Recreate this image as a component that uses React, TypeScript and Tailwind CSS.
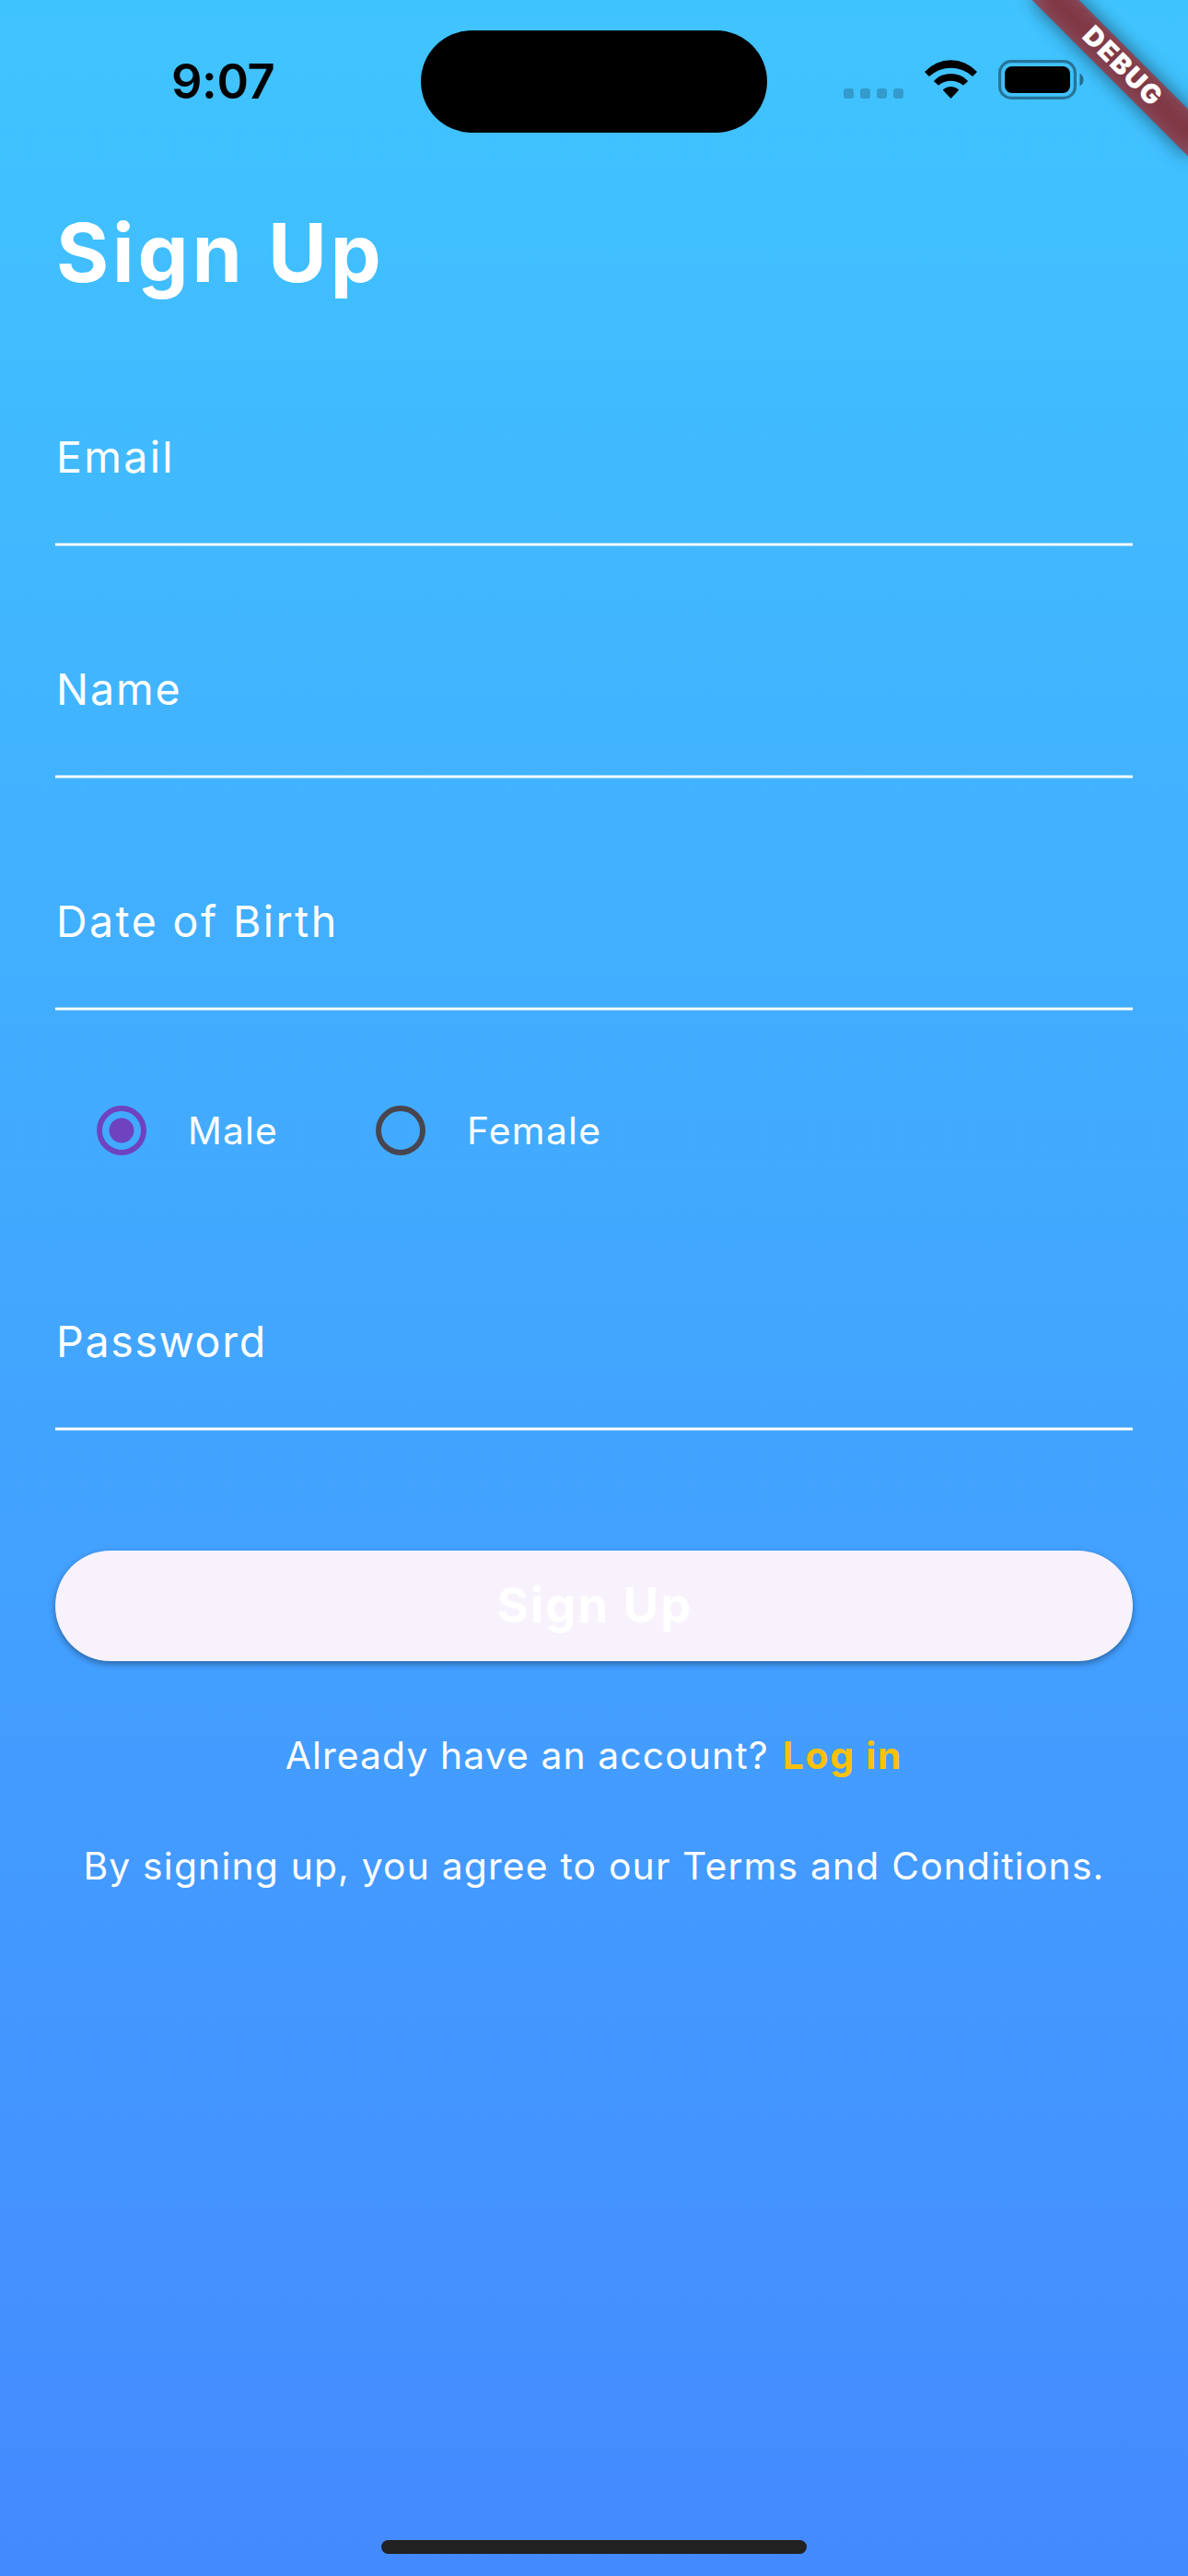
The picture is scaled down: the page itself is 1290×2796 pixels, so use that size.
import React from "react";

function StatusIcons() {
  return (
    <div className="mt-[65px] ml-[83px] flex h-[43px] items-end self-start">
      <svg width="65" height="12" viewBox="0 0 65 12">
        {[0, 18, 36, 54].map((x) => (
          <rect key={x} x={x} y="0" width="11" height="11" rx="3" fill="#000" fillOpacity="0.2" />
        ))}
      </svg>
      <svg width="57" height="43" viewBox="0 0 57 43" className="ml-[23px]">
        <path d="M0.5 13.6Q-0.1 13 0.5 12.4A38.3 38.3 0 0 1 56.5 12.4Q57.1 13 56.5 13.6L52.6 17.5Q52 18 51.4 17.5A34.3 34.3 0 0 0 5.6 17.5Q5 18 4.4 17.5Z" />
        <path d="M10.3 23.5Q9.8 23 10.4 22.4A25.6 25.6 0 0 1 46.6 22.4Q47.2 23 46.7 23.5L42.5 27.3Q42 27.8 41.4 27.3A20.5 20.5 0 0 0 15.6 27.3Q15 27.8 14.5 27.3Z" />
        <path d="M20.3 33.2Q19.7 32.7 20.3 32.1A12.3 12.3 0 0 1 36.7 32.1Q37.3 32.7 36.7 33.2L29 41.4Q28.5 41.9 28 41.4Z" />
      </svg>
      <svg width="94" height="43" viewBox="0 0 94 43" className="ml-[23px]">
        <rect x="1.6" y="1.6" width="81.8" height="39.8" rx="12.5" fill="none" stroke="#000" strokeOpacity="0.4" strokeWidth="3.2" />
        <rect x="7" y="7" width="71" height="29" rx="8" />
        <path d="M88.5 14.5V28.5A8.2 8.2 0 0 0 88.5 14.5Z" fillOpacity="0.45" />
      </svg>
    </div>
  );
}

function DebugBanner() {
  return (
    <div className="absolute top-0 right-0 h-[260px] w-[260px] overflow-hidden">
      <div className="absolute top-[54px] left-[68px] h-[36px] w-[240px] rotate-45">
        <div className="absolute inset-0 bg-black/50 blur-[10.5px]" />
        <div className="relative flex h-full items-center justify-center bg-[#b71c1c]/63 pb-[3px] pl-[2px] text-[29px] leading-none font-black tracking-[1.6px] text-white">
          DEBUG
        </div>
      </div>
    </div>
  );
}

function Field({ label, className }: { label: string; className: string }) {
  return (
    <div className={className}>
      <div className="h-[56px] pl-px text-[46.5px] leading-[56px]">{label}</div>
      <div className="mt-[65px] h-[4px] border-y border-white/45 bg-white bg-clip-padding" />
    </div>
  );
}

function RadioOption({ label, checked, spacing }: { label: string; checked?: boolean; spacing: string }) {
  return (
    <div className="flex w-[303px] items-center gap-[45px]">
      <svg width="54" height="54" viewBox="0 0 54 54" className={checked ? "text-[#6f43c0]" : "text-[#49454f]"}>
        <circle cx="27" cy="27" r="24" fill="none" stroke="currentColor" strokeWidth="6" />
        {checked && <circle cx="27" cy="27" r="13.5" fill="currentColor" />}
      </svg>
      <span className={spacing}>{label}</span>
    </div>
  );
}

export default function App() {
  return (
    <div className="relative flex h-[2796px] w-[1290px] flex-col overflow-hidden bg-linear-to-b/srgb from-[#40c4ff] to-[#448aff] font-[Inter,sans-serif] text-white">
      <header className="flex h-[177px] items-center">
        <div className="w-[457px] pb-[2px] pl-[186px] text-[52.4px] leading-[60px] font-semibold tracking-[-0.4px] text-black">9:07</div>
        <div className="h-[111px] w-[376px] rounded-full bg-black" />
        <StatusIcons />
      </header>

      <main className="flex flex-1 flex-col px-[60px]">
        <h1 className="mt-[43px] h-[108px] pl-px text-[87.3px] leading-[108px] font-bold tracking-[3.8px]">Sign Up</h1>

        <Field label="Email" className="mt-[140px] tracking-[2.3px]" />
        <Field label="Name" className="mt-[127px] tracking-[1.9px]" />
        <Field label="Date of Birth" className="mt-[127px] tracking-[2.4px]" />

        <div className="mt-[103px] flex h-[54px] items-center pl-[45px] text-[40.8px] leading-[50px]">
          <RadioOption label="Male" checked spacing="tracking-[1.1px]" />
          <RadioOption label="Female" spacing="tracking-[1.3px]" />
        </div>

        <Field label="Password" className="mt-[174px] tracking-[1.7px]" />

        <button className="mt-[130px] flex h-[120px] items-center justify-center rounded-full bg-[#f7f2fc] pb-[2px] pl-[2px] text-[52.4px] leading-[60px] font-bold tracking-[2.1px] shadow-[0_3px_7px_rgba(0,0,0,0.36)]">
          Sign Up
        </button>

        <div className="mt-[77px] flex h-[50px] justify-center gap-[15px] text-[40.8px] leading-[50px] whitespace-nowrap">
          <span className="tracking-[1.12px]">Already have an account?</span>
          <span className="font-bold tracking-[1.76px] text-[#ffc107]">Log in</span>
        </div>
        <p className="mt-[70px] text-center text-[40.8px] leading-[50px] tracking-[1.19px] whitespace-nowrap">
          By signing up, you agree to our Terms and Conditions.
        </p>
      </main>

      <footer className="flex justify-center pb-[24px]">
        <div className="h-[15px] w-[462px] rounded-full bg-[#212121]" />
      </footer>

      <DebugBanner />
    </div>
  );
}
